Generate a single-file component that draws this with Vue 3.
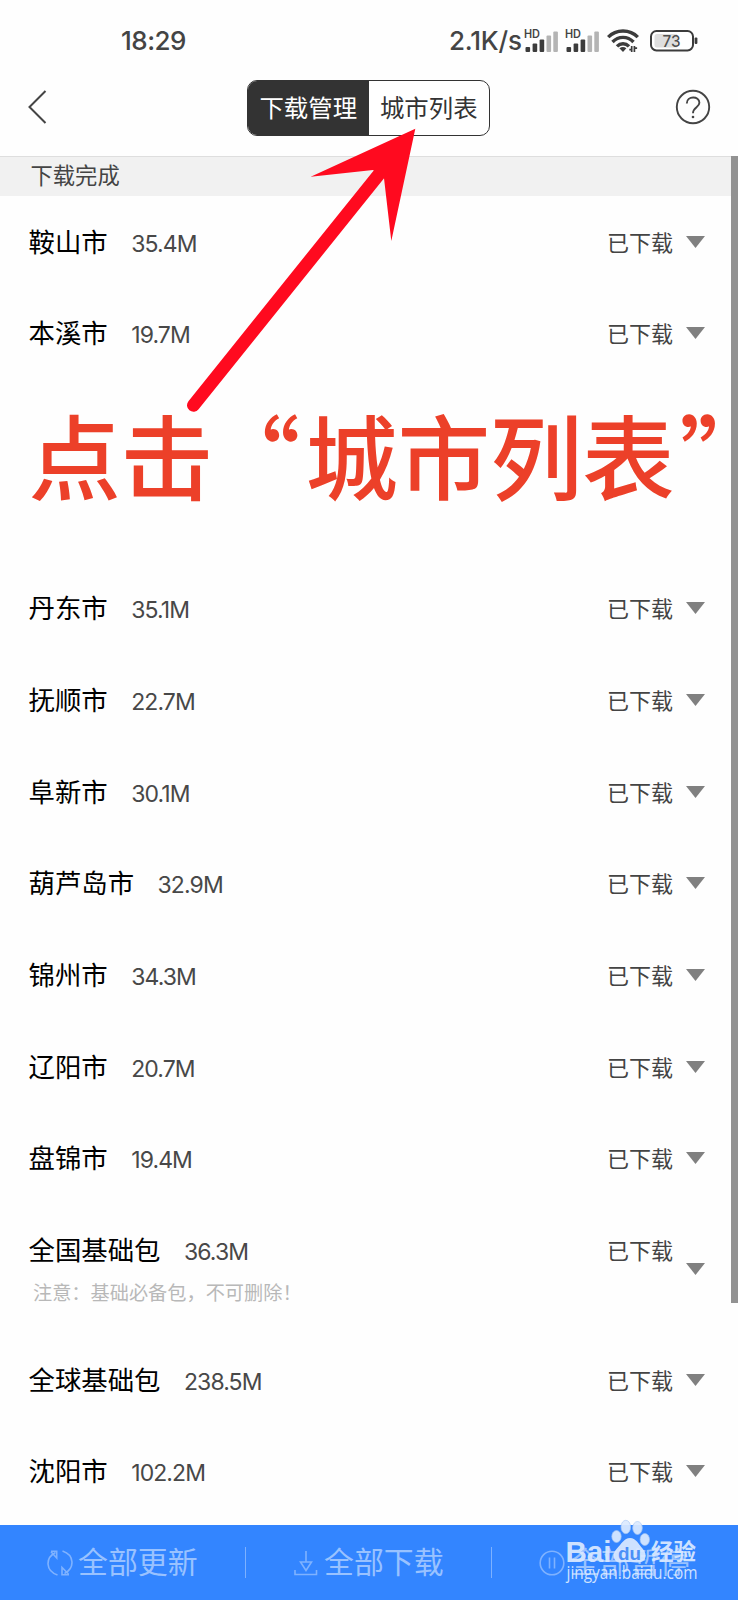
<script setup>
const before = [
  { name: '鞍山市', size: '35.4M' },
  { name: '本溪市', size: '19.7M' },
]
const after = [
  { name: '丹东市', size: '35.1M' },
  { name: '抚顺市', size: '22.7M' },
  { name: '阜新市', size: '30.1M' },
  { name: '葫芦岛市', size: '32.9M' },
  { name: '锦州市', size: '34.3M' },
  { name: '辽阳市', size: '20.7M' },
  { name: '盘锦市', size: '19.4M' },
  { name: '全国基础包', size: '36.3M', note: '注意：基础必备包，不可删除！' },
  { name: '全球基础包', size: '238.5M' },
  { name: '沈阳市', size: '102.2M' },
]
const rows = [...before, { gap: true }, ...after]
const signals = [0, 1]
</script>

<template>
  <div class="screen" lang="zh-CN">
    <div class="status">
      <span class="time">18:29</span>
      <div class="indicators">
        <span class="speed">2.1K/s</span>
        <svg v-for="s in signals" :key="s" class="signal" width="35" height="24" viewBox="0 0 35 24">
          <text x="0" y="9" font-size="11.5" font-weight="600" textLength="16" lengthAdjust="spacingAndGlyphs" fill="#444">HD</text>
          <g fill="#3c3c3c">
            <rect x="1.5" y="18" width="4.6" height="5" rx="1" />
            <rect x="8.6" y="14.5" width="4.6" height="8.5" rx="1" />
            <rect x="15.6" y="10.5" width="4.6" height="12.5" rx="1" />
          </g>
          <g fill="#b4b4b4">
            <rect x="22.5" y="6.5" width="4.6" height="16.5" rx="1" />
            <rect x="29.3" y="2.5" width="4.6" height="20.5" rx="1" />
          </g>
        </svg>
        <svg class="wifi" width="32" height="25" viewBox="0 0 32 25">
          <g fill="none" stroke="#3c3c3c" stroke-width="3.4">
            <path d="M1.2 9.2C9 1 23 1 30.8 9.2" />
            <path d="M5.5 14C11.5 7.8 20.5 7.8 26.5 14" />
            <path d="M10 18.4C13.5 14.8 18.5 14.8 22 18.4" />
          </g>
          <path d="M12.4 20.3Q16 17.6 19.4 20.3L16 24Z" fill="#3c3c3c" />
          <path d="M24.7 24v-6M27.4 18v6M22.3 21.6h2.6M27.4 20.2h2.7" fill="none" stroke="#3c3c3c" stroke-width="1.7" />
        </svg>
        <svg class="battery" width="48" height="22" viewBox="0 0 48 22">
          <rect x="1" y="1" width="42" height="19.4" rx="5.5" fill="#fff" stroke="#3c3c3c" stroke-width="2" />
          <path d="M7 4h20v13.4H7q-2.5 0-2.5-2.5V6.5Q4.5 4 7 4Z" fill="#dedede" />
          <rect x="44.6" y="7.5" width="2.8" height="6.5" rx="1" fill="#3c3c3c" />
          <text x="12.5" y="16.6" font-size="16" font-weight="500" textLength="18" lengthAdjust="spacingAndGlyphs" fill="#505050">73</text>
        </svg>
      </div>
    </div>

    <header class="nav">
      <svg class="back" width="20" height="36" viewBox="0 0 20 36">
        <path d="M17.5 2L1.5 18L17.5 34" fill="none" stroke="#444" stroke-width="2" />
      </svg>
      <div class="tabs">
        <div class="tab active">下载管理</div>
        <div class="tab">城市列表</div>
      </div>
      <svg class="help" width="36" height="36" viewBox="0 0 36 36">
        <g fill="none" stroke="#444">
          <circle cx="18" cy="18" r="16.2" stroke-width="1.9" />
          <path d="M11.8 14.4C11.8 6.7 24.4 6.7 24.4 13.8C24.4 18.6 18 18 18 24.3" stroke-width="1.9" />
        </g>
        <circle cx="18" cy="28" r="1.3" fill="#444" />
      </svg>
    </header>

    <div class="section">下载完成</div>

    <main class="list">
      <div v-for="(r, i) in rows" :key="i" :class="['row', { gap: r.gap, tall: r.note }]">
        <template v-if="!r.gap">
          <div class="info">
            <div class="line">
              <span class="name">{{ r.name }}</span>
              <span class="size">{{ r.size }}</span>
              <span class="state">已下载</span>
            </div>
            <div v-if="r.note" class="note">{{ r.note }}</div>
          </div>
          <svg class="caret" width="19" height="12" viewBox="0 0 19 12">
            <path d="M0 0H19L9.5 12Z" fill="#808080" />
          </svg>
        </template>
      </div>
    </main>

    <footer class="actions">
      <div class="action">
        <svg width="26" height="28" viewBox="0 0 26 28">
          <g fill="none" stroke="currentColor" stroke-width="1.6">
            <path d="M10.5 26C-1.5 22-2 9 8.5 3.5" />
            <path d="M4 2.3H9.7V9L4 2.8" />
            <path d="M15.5 2C27.5 6 28 19 17.5 24.5" />
            <path d="M22 25.7H15V18.5L21.5 25" />
          </g>
        </svg>
        <span>全部更新</span>
      </div>
      <div class="action">
        <svg width="26" height="28" viewBox="0 0 26 28">
          <path d="M13 2V13M7.5 13H18.5L13 21.5ZM2 21V25.5H23.5V21" fill="none" stroke="currentColor" stroke-width="1.6" />
        </svg>
        <span>全部下载</span>
      </div>
      <div class="action">
        <svg width="26" height="28" viewBox="0 0 26 28">
          <circle cx="13" cy="14" r="11.8" fill="none" stroke="currentColor" stroke-width="1.6" />
          <path d="M10.5 8.5v11M15.5 8.5v11" stroke="currentColor" stroke-width="1.6" />
        </svg>
        <span>全部暂停</span>
      </div>
    </footer>

    <div class="scrollbar"></div>
    <svg class="arrow" width="240" height="300" viewBox="180 120 240 300">
      <path d="M193.5 405.2L380 173" stroke="#ff0a1f" stroke-width="13" stroke-linecap="round" />
      <path d="M415.3 128.7L310.7 176.7L373 170L384 178.3L391.3 241Z" fill="#ff0a1f" />
    </svg>
    <div class="callout">点击<span class="open">“</span>城市列表<span class="close">”</span></div>

    <svg class="watermark" width="140" height="68" viewBox="560 1516 140 68">
      <g class="mark" fill="#dceaff">
        <text class="latin" x="565.5" y="1561.5" font-size="29" font-weight="700" textLength="46" lengthAdjust="spacingAndGlyphs">Bai</text>
        <g stroke="#a9c8f5" stroke-width=".7">
          <ellipse cx="616.5" cy="1536.5" rx="4.7" ry="6" />
          <ellipse cx="625.8" cy="1527" rx="4.8" ry="6.7" />
          <ellipse cx="637.5" cy="1528" rx="4.8" ry="6.5" />
          <ellipse cx="644.8" cy="1539.5" rx="4.7" ry="6" />
        </g>
        <path d="M630 1538C636 1538 638.5 1544 642.5 1548.5C648 1554 646 1562.5 639 1562.5C634 1562.5 627 1561.5 621 1562.5C613 1563 611.5 1554 616.5 1549C621.5 1544 624 1538 630 1538Z" />
        <text class="latin" x="618" y="1559.5" font-size="19" font-weight="700" fill="#4a8ff7" textLength="23" lengthAdjust="spacingAndGlyphs">du</text>
        <text x="651" y="1559.5" font-size="22.5" font-weight="700" textLength="45">经验</text>
        <text class="url" x="566.5" y="1578.5" font-size="18" textLength="131" lengthAdjust="spacingAndGlyphs">jingyan.baidu.com</text>
      </g>
    </svg>
  </div>
</template>

<style>
body {
  margin: 0;
  background: #fefefe;
}
</style>

<style scoped>
.screen {
  position: relative;
  box-sizing: border-box;
  width: 738px;
  height: 1600px;
  overflow: hidden;
  display: flex;
  flex-direction: column;
  background: #fefefe;
  color: #3c3c3c;
  font-family: Inter, "Noto Sans CJK SC", sans-serif;
}
.status {
  height: 80px;
  box-sizing: border-box;
  padding: 1px 40px 0 121px;
  display: flex;
  justify-content: space-between;
  align-items: center;
}
.time,
.speed {
  font-size: 26px;
  font-weight: 500;
  line-height: 30px;
  color: #444;
}
.time {
  letter-spacing: -0.5px;
}
.indicators {
  display: flex;
  align-items: center;
}
.speed {
  width: 75px;
  padding-top: 1px;
  letter-spacing: -0.2px;
  white-space: nowrap;
}
.signal {
  margin-right: 6px;
  overflow: visible;
}
.wifi {
  margin-left: 1px;
}
.battery {
  margin-left: 11px;
}
.nav {
  height: 76px;
  box-sizing: border-box;
  padding: 0 27px 0 28px;
  display: flex;
  align-items: flex-start;
  justify-content: space-between;
}
.back {
  margin-top: 9px;
}
.help {
  margin-top: 9px;
}
.tabs {
  display: flex;
  box-sizing: border-box;
  width: 243px;
  height: 56px;
  margin-left: 14px;
  border: 1.5px solid #333;
  border-radius: 10px;
  overflow: hidden;
  background: #fff;
}
.tab {
  flex: 1;
  text-align: center;
  font-size: 24.4px;
  line-height: 54px;
  white-space: nowrap;
  color: #333;
}
.tab.active {
  background: #333;
  color: #fff;
}
.section {
  box-sizing: border-box;
  height: 40px;
  padding-left: 30.5px;
  border-top: 1px solid #dedede;
  background: #f1f1f1;
  font-size: 22.3px;
  line-height: 38px;
  color: #444;
}
.row {
  height: 91.67px;
  box-sizing: border-box;
  padding: 0 33px 0 28.5px;
  display: flex;
  align-items: center;
}
.row.gap {
  height: 183.34px;
}
.row.tall {
  height: 129.5px;
}
.info {
  flex: 1;
}
.line {
  display: flex;
  align-items: center;
  height: 36px;
}
.row.tall .info {
  align-self: flex-start;
  padding-top: 28px;
}
.name {
  font-size: 26.4px;
  color: #000;
  line-height: 36px;
}
.size {
  margin-left: 23.5px;
  padding-top: 4px;
  font-size: 23px;
  letter-spacing: -0.9px;
  color: #484848;
}
.state {
  margin-left: auto;
  margin-right: 13px;
  padding-top: 2px;
  font-size: 22px;
  line-height: 32px;
  color: #444;
}
.note {
  margin: 11px 0 0 4.5px;
  font-size: 19.2px;
  line-height: 28px;
  color: #b8b8b8;
}
.actions {
  margin-top: auto;
  height: 75px;
  display: flex;
  background: #3385ff;
  color: #99c2ff;
}
.action {
  position: relative;
  box-sizing: border-box;
  width: 246px;
  padding-left: 47px;
  display: flex;
  align-items: center;
  font-size: 29.9px;
  white-space: nowrap;
}
.action span {
  margin-left: 5px;
  padding-bottom: 5px;
}
.action svg {
  opacity: 0.75;
}
.action + .action::before {
  content: "";
  position: absolute;
  left: -1px;
  top: 22px;
  width: 1px;
  height: 31px;
  background: #7db1ff;
}
.scrollbar {
  position: absolute;
  left: 731px;
  top: 156px;
  width: 7px;
  height: 1147px;
  background: #929292;
}
.arrow {
  position: absolute;
  left: 180px;
  top: 120px;
}
.callout {
  position: absolute;
  left: 28.5px;
  top: 393px;
  font-family: "Noto Sans CJK SC", sans-serif;
  font-size: 92.3px;
  font-weight: 500;
  line-height: 120px;
  white-space: nowrap;
  color: #ec4029;
}
.open {
  margin-left: -5px;
  margin-right: 5px;
}
.close {
  margin-left: 5px;
}
.watermark {
  position: absolute;
  left: 560px;
  top: 1516px;
}
.mark {
  opacity: 0.92;
}
.latin {
  font-family: "Liberation Sans", sans-serif;
}
.url {
  font-family: "Open Sans", sans-serif;
}
</style>
